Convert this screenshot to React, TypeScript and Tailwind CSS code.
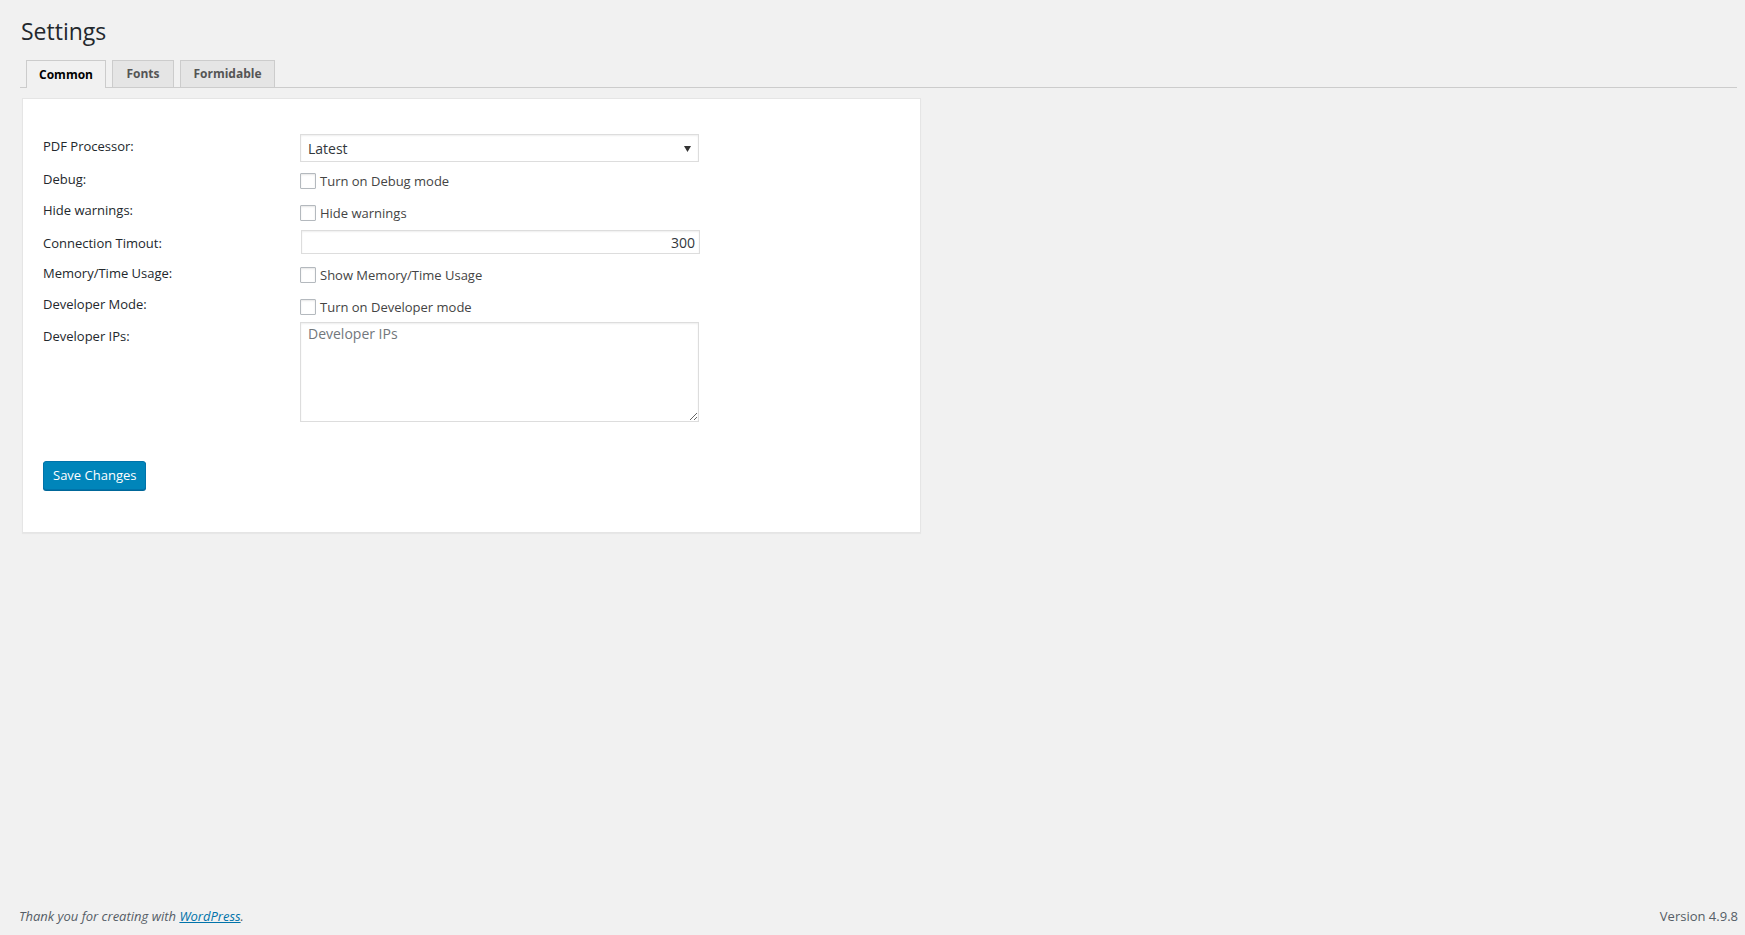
import React, { useState } from "react";

const font = { fontFamily: '"Open Sans", "Noto Sans", sans-serif' };

function Checkbox({ label, top }: { label: string; top: string }) {
  const [checked, setChecked] = useState(false);
  return (
    <label className={`flex items-center gap-[4px] cursor-pointer ${top}`}>
      <span
        onClick={() => setChecked(!checked)}
        className="w-[16px] h-[16px] border border-[#b4b9be] bg-white shadow-[inset_0_1px_2px_rgba(0,0,0,0.1)] rounded-[1px] shrink-0"
      />
      <span className="text-[13px] text-[#444] leading-[20px]">{label}</span>
    </label>
  );
}

function Row({ label, labelTop, height, children }: { label: string; labelTop: string; height: string; children: React.ReactNode }) {
  return (
    <div className={`flex items-start ${height}`}>
      <div className={`w-[257px] shrink-0 text-[13px] leading-[20px] text-[#23282d] ${labelTop}`}>{label}</div>
      <div>{children}</div>
    </div>
  );
}

const tabs = [
  { name: "Common", width: "w-[80px]" },
  { name: "Fonts", width: "w-[62px]" },
  { name: "Formidable", width: "w-[95px]" },
];

export default function App() {
  const [tab, setTab] = useState("Common");

  return (
    <div className="min-h-[935px] bg-[#f1f1f1] flex flex-col text-[#444]" style={font}>
      <div className="flex-1 pl-[20px] pr-[8px]">
        <h1 className="text-[23px] leading-[30px] font-normal text-[#23282d] pt-[16px] pl-[1px]">Settings</h1>

        <div className="mt-[14px] flex items-end gap-[6px] pl-[6px] border-b border-[#ccc] h-[28px]">
          {tabs.map((t) => (
            <button
              key={t.name}
              onClick={() => setTab(t.name)}
              className={
                t.name === tab
                  ? `${t.width} h-[28px] -mb-px border border-b-0 border-[#ccc] bg-[#f1f1f1] text-[12px] font-bold text-black`
                  : `${t.width} h-[27px] border border-b-0 border-[#ccc] bg-[#e5e5e5] text-[12px] font-bold text-[#555]`
              }
            >
              {t.name}
            </button>
          ))}
        </div>

        <div className="mt-[10px] ml-[2px] w-[899px] bg-white border border-[#e5e5e5] shadow-[0_1px_1px_rgba(0,0,0,0.04)] pl-[20px] pt-[35px] pb-[42px]">
          <Row label="PDF Processor:" labelTop="mt-[2px]" height="h-[35px]">
            <div className="relative w-[399px] h-[28px] border border-[#ddd] shadow-[inset_0_1px_2px_rgba(0,0,0,0.07)] flex items-center pl-[7px]">
              <span className="text-[14px] text-[#32373c]">Latest</span>
              <svg className="absolute right-[7px] top-[11px]" width="7" height="6" viewBox="0 0 7 6">
                <path d="M0 0h7L3.5 6z" fill="#333" />
              </svg>
            </div>
          </Row>
          <Row label="Debug:" labelTop="mt-0" height="h-[31px]">
            <Checkbox label="Turn on Debug mode" top="mt-[2px]" />
          </Row>
          <Row label="Hide warnings:" labelTop="mt-0" height="h-[30px]">
            <Checkbox label="Hide warnings" top="mt-[3px]" />
          </Row>
          <Row label="Connection Timout:" labelTop="mt-[3px]" height="h-[33px]">
            <div className="ml-[1px] w-[399px] h-[24px] border border-[#ddd] shadow-[inset_0_1px_2px_rgba(0,0,0,0.07)] flex items-center justify-end pr-[4px]">
              <span className="text-[14px] text-[#32373c]">300</span>
            </div>
          </Row>
          <Row label="Memory/Time Usage:" labelTop="mt-0" height="h-[31px]">
            <Checkbox label="Show Memory/Time Usage" top="mt-[2px]" />
          </Row>
          <Row label="Developer Mode:" labelTop="mt-0" height="h-[28px]">
            <Checkbox label="Turn on Developer mode" top="mt-[3px]" />
          </Row>
          <Row label="Developer IPs:" labelTop="mt-[4px]" height="h-[100px]">
            <textarea
              placeholder="Developer IPs"
              className="block w-[399px] h-[100px] border border-[#ddd] shadow-[inset_0_1px_2px_rgba(0,0,0,0.07)] px-[7px] py-[1px] text-[14px] leading-[20px] text-[#32373c] placeholder:text-[#72777c] outline-none"
            />
          </Row>

          <button className="mt-[39px] h-[29px] px-[9px] rounded-[3px] bg-[#0085ba] border border-[#0073aa] shadow-[0_1px_0_#006799] text-white text-[13px]">
            Save Changes
          </button>
        </div>
      </div>

      <div className="flex justify-between items-center px-[19px] pr-[7px] h-[36px] text-[13px] text-[#555d66]">
        <span className="italic">
          Thank you for creating with <a href="#" className="underline text-[#0073aa]">WordPress</a>.
        </span>
        <span>Version 4.9.8</span>
      </div>
    </div>
  );
}
